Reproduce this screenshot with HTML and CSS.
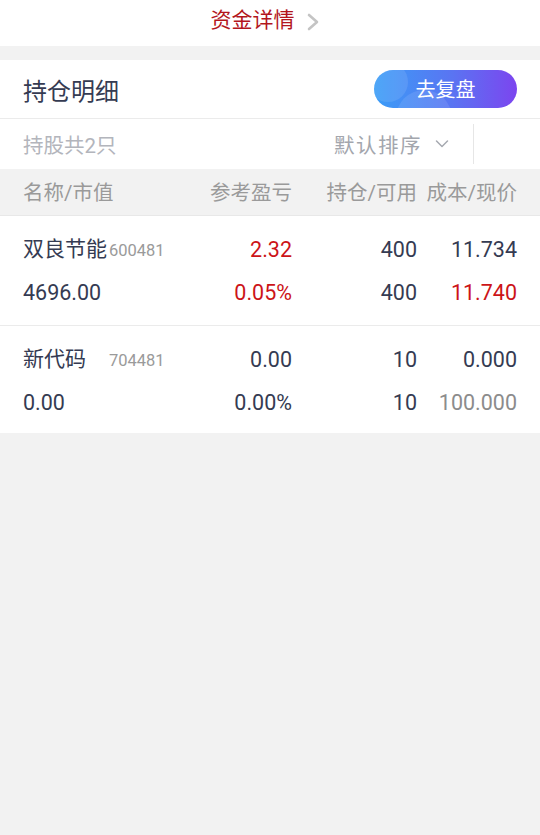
FILE: index.html
```html
<!DOCTYPE html>
<html lang="zh-CN">
<head>
    <meta charset="UTF-8">
    <meta name="viewport" content="width=device-width, initial-scale=1.0">
    <title>持仓明细</title>
    <link rel="stylesheet" href="styles.css">
</head>
<body>

<div class="topbar">
    <a class="fund-link" href="#">资金详情
        <svg class="chev-right" width="14" height="20" viewBox="0 0 14 20">
            <path d="M3 3 L11 10 L3 17" fill="none" stroke="#c4c4c4" stroke-width="2.6" stroke-linecap="round" stroke-linejoin="round"/>
        </svg>
    </a>
</div>

<section class="panel">
    <div class="panel-head">
        <h2>持仓明细</h2>
        <button class="review-btn" type="button">去复盘</button>
    </div>

    <div class="toolbar">
        <span class="count">持股共2只</span>
        <span class="sort">默认排序
            <svg width="14" height="10" viewBox="0 0 14 10">
                <path d="M1.5 2 L7 7.5 L12.5 2" fill="none" stroke="#a6a9b0" stroke-width="1.5" stroke-linecap="round" stroke-linejoin="round"/>
            </svg>
        </span>
        <span class="toolbar-end"></span>
    </div>

    <div class="table-head cols">
        <span class="left">名称/市值</span>
        <span>参考盈亏</span>
        <span>持仓/可用</span>
        <span>成本/现价</span>
    </div>

    <!-- positions -->
    <div class="pos-row cols">
        <span class="left stock-cell"><span class="stock">双良节能</span><em class="code">600481</em></span>
        <span class="up">2.32</span>
        <span>400</span>
        <span>11.734</span>
        <span class="left">4696.00</span>
        <span class="up">0.05%</span>
        <span>400</span>
        <span class="up">11.740</span>
    </div>

    <div class="pos-row cols">
        <span class="left stock-cell"><span class="stock">新代码</span><em class="code">704481</em></span>
        <span>0.00</span>
        <span>10</span>
        <span>0.000</span>
        <span class="left">0.00</span>
        <span>0.00%</span>
        <span>10</span>
        <span class="muted">100.000</span>
    </div>
</section>

</body>
</html>
```

FILE: styles.css
```css
* {
    box-sizing: border-box;
}

body {
    margin: 0;
    background: #f2f2f2;
    color: #353b52;
    font-family: Roboto, "Noto Sans CJK SC", sans-serif;
}

.topbar {
    height: 46px;
    padding-bottom: 6px;
    background: #fff;
    display: flex;
    justify-content: center;
    align-items: center;
}

.fund-link {
    display: flex;
    align-items: center;
    gap: 11px;
    margin-left: -10px;
    color: #b3161d;
    font-size: 21px;
    line-height: 40px;
    text-decoration: none;
}

.chev-right {
    margin-top: 3px;
}

.panel {
    margin-top: 14px;
    background: #fff;
}

.panel-head {
    height: 59px;
    padding: 0 23px;
    border-bottom: 1px solid #ebebeb;
    display: flex;
    align-items: center;
    justify-content: space-between;
}

.panel-head h2 {
    margin: 0;
    font-size: 24px;
    font-weight: normal;
    color: #353b52;
}

.review-btn {
    position: relative;
    overflow: hidden;
    width: 143px;
    height: 38px;
    margin-top: -1px;
    padding: 0;
    border: none;
    border-radius: 19px;
    background: linear-gradient(90deg, #3a9df7, #5a74f2 55%, #7c45ef);
    color: #fff;
    font-family: inherit;
    font-size: 20px;
    cursor: pointer;
}

/* soft bubbles on the button */
.review-btn::before,
.review-btn::after {
    content: "";
    position: absolute;
    border-radius: 50%;
    background: rgba(255, 255, 255, 0.1);
}

.review-btn::before {
    width: 40px;
    height: 40px;
    left: -6px;
    top: -8px;
}

.review-btn::after {
    width: 56px;
    height: 56px;
    left: 22px;
    top: 20px;
}

.toolbar {
    height: 50px;
    padding-left: 23px;
    display: flex;
    align-items: center;
    font-size: 20.5px;
}

.count {
    color: #b3b5bc;
    flex: 1;
}

.sort {
    display: flex;
    align-items: center;
    gap: 13px;
    color: #a3a6ad;
    letter-spacing: 1.5px;
}

.toolbar-end {
    width: 67px;
    height: 40px;
    margin-left: 24px;
    border-left: 1px solid #e6e6e6;
}

.cols {
    display: grid;
    grid-template-columns: 145px 124px 125px 100px;
    padding: 0 23px;
    text-align: right;
    white-space: nowrap;
}

.cols .left {
    text-align: left;
}

.table-head {
    height: 47px;
    padding-top: 1px;
    line-height: 46px;
    background: #f2f2f2;
    border-bottom: 1px solid #e8e8e8;
    color: #9a9a9a;
    font-size: 20.5px;
}

.pos-row {
    padding-top: 12px;
    padding-bottom: 11px;
    border-bottom: 1px solid #ebebeb;
    line-height: 43px;
    font-size: 21.5px;
}

.pos-row:last-child {
    padding-bottom: 9px;
    border-bottom: none;
}

.stock-cell {
    display: flex;
    align-items: baseline;
    height: 43px;
}

.stock {
    width: 86px;
    font-size: 21px;
}

.code {
    font-style: normal;
    font-size: 16.5px;
    color: #9a9a9a;
}

.pos-row .up {
    color: #cc1418;
}

.pos-row .muted {
    color: #8c8c8c;
}
```
